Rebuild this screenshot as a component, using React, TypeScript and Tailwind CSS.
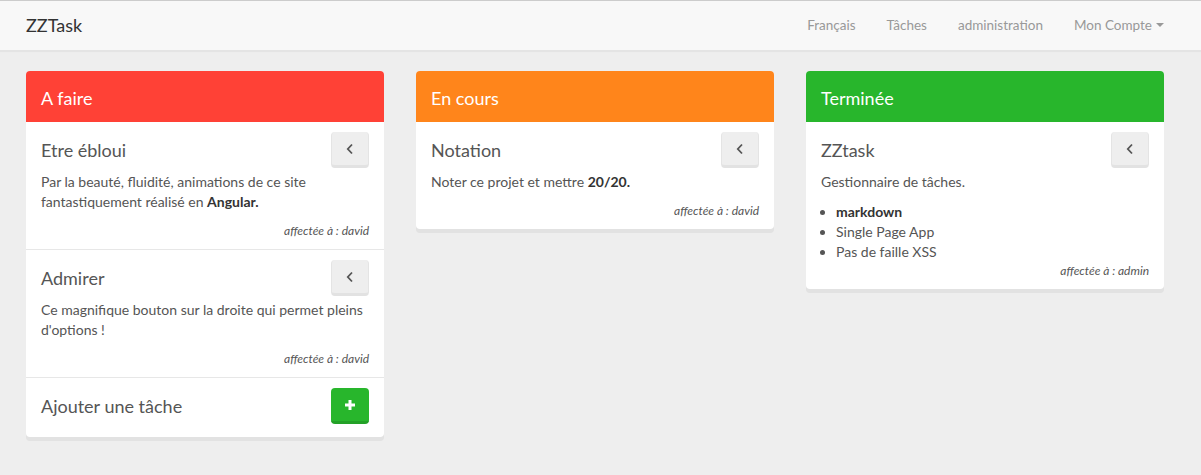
import React from "react";

const font = { fontFamily: "Lato, 'Open Sans', 'Liberation Sans', sans-serif" };

function ChevronBtn() {
  return (
    <button className="w-[38px] h-[36px] rounded-[4px] bg-[#eeeeee] border-x border-x-[#e4e4e4] border-b-[3px] border-b-[#e2e2e2] flex items-center justify-center shrink-0">
      <svg width="10" height="12" viewBox="0 0 10 12">
        <path d="M7 1.5 L2.8 6 L7 10.5" fill="none" stroke="#555" strokeWidth="1.8" />
      </svg>
    </button>
  );
}

function PlusBtn() {
  return (
    <button className="w-[38px] h-[36px] rounded-[4px] bg-[#28b62c] border-b-[3px] border-b-[#23a127] flex items-center justify-center shrink-0">
      <svg width="12" height="12" viewBox="0 0 12 12">
        <path d="M6 1 V11 M1 6 H11" stroke="#fff" strokeWidth="3" />
      </svg>
    </button>
  );
}

function Item({ title, children, who, last }: { title: string; children: React.ReactNode; who: string; last?: boolean }) {
  return (
    <div className={"px-[15px] pt-[10px] pb-[10px] " + (last ? "" : "border-b border-[#e7e7e7]")}>
      <div className="flex items-center justify-between h-[36px]">
        <div className="text-[18px] text-[#555]">{title}</div>
        <ChevronBtn />
      </div>
      <div className="mt-[4px] text-[14px] leading-[20px] text-[#555]">{children}</div>
      <div className="text-right italic text-[12px] leading-[17px] text-[#555]">affectée à : {who}</div>
    </div>
  );
}

function Panel({ title, color, children }: { title: string; color: string; children: React.ReactNode }) {
  return (
    <div className="w-[358px] bg-white rounded-[4px] shadow-[0_4px_0_#e2e2e2]">
      <div className={"h-[51px] rounded-t-[4px] px-[15px] flex items-center pt-[4px] text-white text-[18px] " + color}>{title}</div>
      {children}
    </div>
  );
}

export default function App() {
  return (
    <div style={font} className="min-h-[475px] bg-[#eeeeee] border-t border-[#cccccc]">
      <div className="h-[49px] bg-[#f8f8f8] shadow-[0_2px_1px_#e4e4e4] flex items-center justify-between pl-[26px] pr-[37px]">
        <div className="text-[18px] text-[#333]">ZZTask</div>
        <div className="flex items-center text-[13.5px] text-[#999]">
          <span className="mr-[31px]">Français</span>
          <span className="mr-[31px]">Tâches</span>
          <span className="mr-[31px]">administration</span>
          <span className="flex items-center">
            Mon Compte
            <svg width="8" height="5" viewBox="0 0 8 5" className="ml-[4px]">
              <path d="M0 0 H8 L4 4 Z" fill="#999" />
            </svg>
          </span>
        </div>
      </div>
      <div className="flex items-start gap-[32px] pl-[26px] pt-[21px]">
        <Panel title="A faire" color="bg-[#ff4136]">
          <Item title="Etre ébloui" who="david">
            <p className="mb-[10px]">
              Par la beauté, fluidité, animations de ce site fantastiquement réalisé en <b className="text-[#333]">Angular.</b>
            </p>
          </Item>
          <Item title="Admirer" who="david">
            <p className="mb-[10px]">Ce magnifique bouton sur la droite qui permet pleins d'options !</p>
          </Item>
          <div className="px-[15px] pt-[10px] pb-[13px]">
            <div className="flex items-center justify-between h-[36px]">
              <div className="text-[18px] text-[#555]">Ajouter une tâche</div>
              <PlusBtn />
            </div>
          </div>
        </Panel>
        <Panel title="En cours" color="bg-[#ff851b]">
          <Item title="Notation" who="david" last>
            <p className="mb-[10px]">
              Noter ce projet et mettre <b className="text-[#333]">20/20.</b>
            </p>
          </Item>
        </Panel>
        <Panel title="Terminée" color="bg-[#28b62c]">
          <Item title="ZZtask" who="admin" last>
            <p className="mb-[10px]">Gestionnaire de tâches.</p>
            <ul className="list-disc pl-[15px] marker:text-[#555]">
              <li><b className="text-[#333]">markdown</b></li>
              <li>Single Page App</li>
              <li>Pas de faille XSS</li>
            </ul>
          </Item>
        </Panel>
      </div>
    </div>
  );
}
